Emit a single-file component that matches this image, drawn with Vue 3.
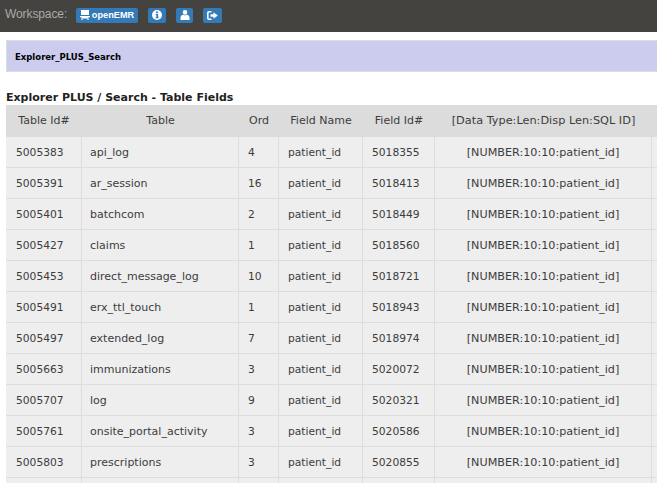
<script setup>
const rows = [
  ['5005383', 'api_log', '4', 'patient_id', '5018355', '[NUMBER:10:10:patient_id]'],
  ['5005391', 'ar_session', '16', 'patient_id', '5018413', '[NUMBER:10:10:patient_id]'],
  ['5005401', 'batchcom', '2', 'patient_id', '5018449', '[NUMBER:10:10:patient_id]'],
  ['5005427', 'claims', '1', 'patient_id', '5018560', '[NUMBER:10:10:patient_id]'],
  ['5005453', 'direct_message_log', '10', 'patient_id', '5018721', '[NUMBER:10:10:patient_id]'],
  ['5005491', 'erx_ttl_touch', '1', 'patient_id', '5018943', '[NUMBER:10:10:patient_id]'],
  ['5005497', 'extended_log', '7', 'patient_id', '5018974', '[NUMBER:10:10:patient_id]'],
  ['5005663', 'immunizations', '3', 'patient_id', '5020072', '[NUMBER:10:10:patient_id]'],
  ['5005707', 'log', '9', 'patient_id', '5020321', '[NUMBER:10:10:patient_id]'],
  ['5005761', 'onsite_portal_activity', '3', 'patient_id', '5020586', '[NUMBER:10:10:patient_id]'],
  ['5005803', 'prescriptions', '3', 'patient_id', '5020855', '[NUMBER:10:10:patient_id]'],
  ['', '', '', '', '', ''],
]
const heads = ['Table Id#', 'Table', 'Ord', 'Field Name', 'Field Id#', '[Data Type:Len:Disp Len:SQL ID]', '']
</script>

<template>
  <div class="page">
    <header class="topbar">
      <span class="label">Workspace:</span>
      <button class="btn wide">
        <svg class="ico cart" viewBox="0 0 10 10"><path d="M1 0h8v5H1zM0 6h10v1.200H8.500V8.500h-7V7.200H0z" fill="#fff"/><circle cx="2" cy="9.200" r=".8" fill="#fff"/><circle cx="8" cy="9.200" r=".8" fill="#fff"/></svg>
        <span>openEMR</span>
      </button>
      <button class="btn b2">
        <svg class="ico" viewBox="0 0 10 10"><circle cx="5" cy="5" r="5" fill="#fff"/><rect x="4" y="1.500" width="2" height="1.600" fill="#337ab7"/><path d="M3.600 4h2.500v3.200h.6v1H3.600v-1h.7V5h-.7z" fill="#337ab7"/></svg>
      </button>
      <button class="btn b3">
        <svg class="ico" viewBox="0 0 10 10"><circle cx="5" cy="2.400" r="2.300" fill="#fff"/><path d="M.5 10V7.400C.5 5.800 2 5 3.200 4.700c1.100.8 2.500.8 3.600 0C8 5 9.500 5.800 9.500 7.400V10z" fill="#fff"/></svg>
      </button>
      <button class="btn b4">
        <svg class="ico out" viewBox="0 0 11 9"><path d="M4.500.8H2A1.200 1.200 0 0 0 .8 2v5A1.200 1.200 0 0 0 2 8.200h2.500" fill="none" stroke="#fff" stroke-width="1.600"/><path d="M3.500 3.300H6.500V1.200L10.800 4.500L6.500 7.800V5.700H3.500z" fill="#fff"/></svg>
      </button>
    </header>
    <main class="content">
      <div class="banner">Explorer_PLUS_Search</div>
      <h1 class="title">Explorer PLUS / Search - Table Fields</h1>
      <table class="grid">
        <colgroup>
          <col class="c1" /><col class="c2" /><col class="c3" /><col class="c4" /><col class="c5" /><col class="c6" /><col class="c7" />
        </colgroup>
        <thead>
          <tr><th v-for="(h, i) in heads" :key="i" :class="{ wideh: i === 5 }">{{ h }}</th></tr>
        </thead>
        <tbody>
          <tr v-for="(r, i) in rows" :key="i">
            <td v-for="(c, j) in r" :key="j" :class="{ center: j === 5, name: j === 1, first: j === 0 }">{{ c }}</td>
            <td></td>
          </tr>
        </tbody>
      </table>
    </main>
  </div>
</template>

<style>
html, body { margin: 0; overflow: hidden; background: #fff; }
</style>

<style scoped>
.page { width: 657px; height: 483px; overflow: hidden; font-family: "DejaVu Sans", sans-serif; color: #333; }
.topbar { height: 32px; background: #444340; display: flex; align-items: center; padding: 0 0 2px 5px; box-sizing: border-box; }
.label { font-family: "Liberation Sans", sans-serif; font-size: 12px; letter-spacing: -0.1px; line-height: 14px; color: #aaa; margin: -3px 10px 0 0; width: 61px; white-space: nowrap; }
.btn { height: 15px; width: 18px; border: 0; border-radius: 2px; background: #337ab7; margin-right: 10px; padding: 0; display: flex; align-items: center; justify-content: center; color: #fff; font-family: "Liberation Sans", sans-serif; font-size: 9.200px; font-weight: 700; }
.btn.wide { width: 62px; gap: 2px; }
.btn.b3 { width: 17px; }
.btn.b4 { width: 19px; }
.ico { width: 10px; height: 10px; display: block; }
.ico.out { width: 11px; height: 9px; }
.content { padding: 8px 0 0 6px; }
.banner { height: 32px; box-sizing: border-box; background: #ccccee; border: 1px solid #ddd; border-right: 0; padding: 2px 0 0 8px; display: flex; align-items: center; font-size: 8.500px; font-weight: 700; color: #000; }
.title { margin: 18px 0 0; font-size: 11px; line-height: 15px; font-weight: 700; color: #222; }
.grid { margin-top: 0; border-collapse: separate; border-spacing: 0; table-layout: fixed; width: 701px; font-size: 10.700px; color: #3c3c3c; }
.c1 { width: 76px; } .c2 { width: 157px; } .c3 { width: 40px; } .c4 { width: 84px; } .c5 { width: 72px; } .c6 { width: 217px; } .c7 { width: 55px; }
th { height: 32px; box-sizing: border-box; background: #dcdcdc; font-size: 11px; font-weight: 400; text-align: center; padding: 0 0 1px; }
th.wideh { font-size: 11.300px; }
td { height: 31px; box-sizing: border-box; background: #eee; border-right: 1px solid #ddd; border-bottom: 1px solid #ddd; padding: 0 0 0 9px; }
td.first { padding-left: 10px; }
td.name { font-size: 11px; padding-left: 8px; }
td.center { font-size: 11.200px; text-align: center; padding: 0; }
</style>
